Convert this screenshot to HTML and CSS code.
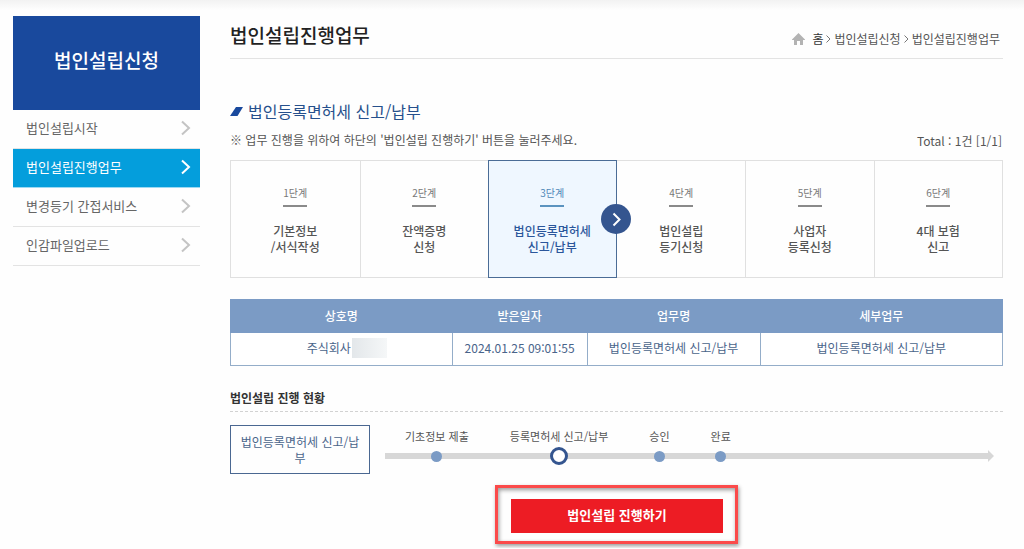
FILE: index.html
```html
<!DOCTYPE html>
<html lang="ko">
<head>
<meta charset="utf-8">
<meta name="viewport" content="width=device-width, initial-scale=1">
<title>법인설립진행업무</title>
<link rel="stylesheet" href="styles.css">
</head>
<body>
<div class="page">
  <aside class="sidebar">
    <h2 class="sidebar-title">법인설립신청</h2>
    <nav>
      <ul class="menu">
        <li><a class="menu-link" href="#">법인설립시작<svg class="arrow" viewBox="0 0 10 16"><path d="M1 1.5 8 8 1 14.5"/></svg></a></li>
        <li><a class="menu-link active" href="#" aria-current="page">법인설립진행업무<svg class="arrow" viewBox="0 0 10 16"><path d="M1 1.5 8 8 1 14.5"/></svg></a></li>
        <li><a class="menu-link" href="#">변경등기 간접서비스<svg class="arrow" viewBox="0 0 10 16"><path d="M1 1.5 8 8 1 14.5"/></svg></a></li>
        <li><a class="menu-link" href="#">인감파일업로드<svg class="arrow" viewBox="0 0 10 16"><path d="M1 1.5 8 8 1 14.5"/></svg></a></li>
      </ul>
    </nav>
  </aside>

  <main class="main">
    <header class="page-head">
      <h1 class="page-title">법인설립진행업무</h1>
      <nav class="crumbs" aria-label="현재 위치">
        <svg class="home" viewBox="0 0 13 12"><path d="M6.5 0 13 6.5V7H11V12H8V8H5V12H2V7H0V6.5Z"/></svg>
        <a class="crumb-home" href="#">홈</a>
        <svg class="sep" viewBox="0 0 5 8"><path d="M.5.5 4 4 .5 7.5"/></svg>
        <a href="#">법인설립신청</a>
        <svg class="sep" viewBox="0 0 5 8"><path d="M.5.5 4 4 .5 7.5"/></svg>
        <a href="#">법인설립진행업무</a>
      </nav>
    </header>

    <h2 class="section-title"><svg class="mark" viewBox="0 0 13 9"><path d="M6 0H13L7.500 9H0Z"/></svg>법인등록면허세 신고/납부</h2>
    <div class="note-row">
      <p class="note">※ 업무 진행을 위하여 하단의 '법인설립 진행하기' 버튼을 눌러주세요.</p>
      <p class="total">Total : 1건 [1/1]</p>
    </div>

    <ol class="steps">
      <li class="step"><span class="step-no">1단계</span><strong class="step-name">기본정보<br>/서식작성</strong></li>
      <li class="step"><span class="step-no">2단계</span><strong class="step-name">잔액증명<br>신청</strong></li>
      <li class="step current"><span class="step-no">3단계</span><strong class="step-name">법인등록면허세<br>신고/납부</strong><svg class="next" viewBox="0 0 30 30"><circle cx="15" cy="15" r="15"/><path d="M12.500 9.500 18.500 15.500 12.500 21.500"/></svg></li>
      <li class="step"><span class="step-no">4단계</span><strong class="step-name">법인설립<br>등기신청</strong></li>
      <li class="step"><span class="step-no">5단계</span><strong class="step-name">사업자<br>등록신청</strong></li>
      <li class="step"><span class="step-no">6단계</span><strong class="step-name">4대 보험<br>신고</strong></li>
    </ol>

    <table class="tasks">
      <colgroup><col class="col-company"><col class="col-date"><col class="col-task"><col></colgroup>
      <thead>
        <tr><th scope="col">상호명</th><th scope="col">받은일자</th><th scope="col">업무명</th><th scope="col">세부업무</th></tr>
      </thead>
      <tbody>
        <tr><td><span class="company">주식회사<span class="masked"></span></span></td><td>2024.01.25 09:01:55</td><td>법인등록면허세 신고/납부</td><td>법인등록면허세 신고/납부</td></tr>
      </tbody>
    </table>

    <h3 class="progress-title">법인설립 진행 현황</h3>
    <div class="progress">
      <div class="progress-name">법인등록면허세 신고/납부</div>
      <ol class="track">
        <li class="point">기초정보 제출<span class="dot"></span></li>
        <li class="point">등록면허세 신고/납부<span class="dot now"></span></li>
        <li class="point">승인<span class="dot"></span></li>
        <li class="point">완료<span class="dot"></span></li>
      </ol>
    </div>

    <div class="action"><button class="go" type="button">법인설립 진행하기</button></div>
  </main>
</div>
</body>
</html>
```
FILE: styles.css
```css
* { box-sizing: border-box; }

body {
  margin: 0;
  background: #fefefe linear-gradient(#f2f2f2, #fefefe) 0 0 / 100% 10px no-repeat;
  color: #555;
  font: 12px/16px "Noto Sans CJK KR", "Noto Sans", sans-serif;
}

h1, h2, h3, p, ol, ul { margin: 0; padding: 0; }
ol, ul { list-style: none; }
a { color: inherit; text-decoration: none; }

.page {
  display: grid;
  grid-template-columns: 187px minmax(0, 1fr);
  column-gap: 30px;
  padding: 16px 21px 4px 13px;
}

/* Sidebar */
.sidebar-title {
  padding: 29px 0 35px;
  background: #19499d;
  color: #fff;
  font-size: 19px;
  font-weight: 500;
  line-height: 30px;
  text-align: center;
}
.menu-link {
  display: flex;
  align-items: center;
  justify-content: space-between;
  height: 39px;
  padding: 0 9px 2px 13px;
  border-bottom: 1px solid #e3e3e3;
  font-size: 13px;
  color: #666;
}
.menu-link.active {
  border-color: #9dd9f2;
  background: #049edc;
  color: #fff;
}
.arrow {
  width: 10px;
  height: 16px;
  fill: none;
  stroke: #c4c4c4;
  stroke-width: 2;
}
.active .arrow { stroke: #fff; }

/* Page heading */
.page-head {
  display: flex;
  align-items: center;
  justify-content: space-between;
  height: 43px;
  padding: 0 3px 4px 0;
  border-bottom: 1px solid #e3e3e3;
}
.page-title {
  color: #222;
  font-size: 19px;
  font-weight: 500;
  line-height: 28px;
}
.crumbs {
  display: flex;
  align-items: center;
  gap: 3px;
  padding-top: 8px;
}
.home { width: 13px; height: 12px; fill: #b3b3b3; }
.crumb-home { margin-left: 4px; color: #333; }
.sep { width: 5px; height: 8px; fill: none; stroke: #777; }

.section-title {
  display: flex;
  align-items: center;
  gap: 5px;
  margin-top: 39px;
  color: #26508c;
  font-size: 16px;
  font-weight: 400;
  line-height: 26px;
}
.mark { width: 13px; height: 9px; fill: #19499d; }
.note-row {
  display: flex;
  justify-content: space-between;
  padding: 5px 1px 7px 0;
  line-height: 22px;
}
.total { line-height: 24px; }

/* Steps */
.steps {
  display: grid;
  grid-template-columns: repeat(6, minmax(0, 1fr));
  border: 1px solid #e0e0e0;
}
.step {
  position: relative;
  display: flex;
  flex-direction: column;
  align-items: center;
  gap: 16px;
  padding: 24px 0 22px;
  text-align: center;
}
.step + .step { border-left: 1px solid #e0e0e0; }
.step-no {
  padding-bottom: 4px;
  border-bottom: 2px solid #8a8a8a;
  color: #777;
  font-size: 10px;
  line-height: 16px;
}
.step-name { font-weight: 500; }
.steps .current {
  z-index: 1;
  margin: -1px 0;
  border: 1px solid #4a6c96;
  background: #eff7ff;
  color: #2b569b;
}
.current + .step { border-left-color: transparent; }
.current .step-no { border-color: #5b93bf; color: #4f88b8; }
.next {
  position: absolute;
  top: 50%;
  right: -15px;
  width: 30px;
  height: 30px;
  margin-top: -15px;
}
.next circle { fill: #34558f; }
.next path { fill: none; stroke: #fff; stroke-width: 2; }

/* Task table */
.tasks {
  width: 100%;
  margin-top: 21px;
  border-collapse: collapse;
  table-layout: fixed;
  text-align: center;
}
.col-company { width: 28.7%; }
.col-date { width: 17.5%; }
.col-task { width: 22.4%; }
.tasks th {
  height: 33px;
  padding: 0;
  border: 1px solid #7b9bc5;
  background: #7b9bc5;
  color: #fff;
  font-weight: 500;
}
.tasks td {
  height: 33px;
  padding: 0 0 2px;
  border: 1px solid #94adc9;
  background: #fff;
  color: #49648a;
}
.company {
  display: flex;
  align-items: center;
  justify-content: center;
  gap: 1px;
  padding-left: 11px;
}
.masked {
  width: 35px;
  height: 20px;
  background: linear-gradient(90deg, #e3e7ea, #f5f7f8);
}

/* Progress */
.progress-title {
  margin-top: 22px;
  padding-bottom: 3px;
  border-bottom: 1px dashed #d2d2d2;
  color: #333;
  font-size: 12px;
  font-weight: 700;
  line-height: 20px;
}
.progress {
  display: flex;
  gap: 15px;
  margin-top: 13px;
}
.progress-name {
  width: 140px;
  padding: 8px 8px 7px;
  border: 1px solid #4a6791;
  color: #49648a;
  text-align: center;
  word-break: break-all;
}
.track {
  position: relative;
  display: flex;
  flex: 1;
  gap: 41px;
  align-items: flex-start;
  margin-right: 9px;
  padding-left: 20px;
}
.track::before,
.track::after {
  content: "";
  position: absolute;
  background: #d7d7d7;
}
.track::before { top: 28px; left: 0; right: 6px; height: 6px; }
.track::after {
  top: 25px;
  right: 0;
  width: 6px;
  height: 12px;
  clip-path: polygon(0 0, 100% 50%, 0 100%);
}
.point {
  z-index: 1;
  display: grid;
  grid-template-rows: 22px 18px;
  place-items: center;
  font-size: 11px;
  white-space: nowrap;
}
.dot {
  width: 11px;
  height: 11px;
  border-radius: 50%;
  background: #7b9bc5;
}
.dot.now {
  width: 18px;
  height: 18px;
  border: 3px solid #34558f;
  background: #fff;
}

.action {
  width: 243px;
  margin: 11px auto 0;
  padding: 11px 12px 8px 13px;
  border: 3px solid #fb4a4a;
  box-shadow: 1px 2px 4px rgba(0, 0, 0, .4), inset 1px 2px 4px rgba(0, 0, 0, .4);
}
.go {
  display: block;
  width: 100%;
  height: 34px;
  padding: 0 0 2px;
  border: 0;
  background: #ed1c24;
  color: #fff;
  font: 700 13px/20px "Noto Sans CJK KR", "Noto Sans", sans-serif;
}
```
